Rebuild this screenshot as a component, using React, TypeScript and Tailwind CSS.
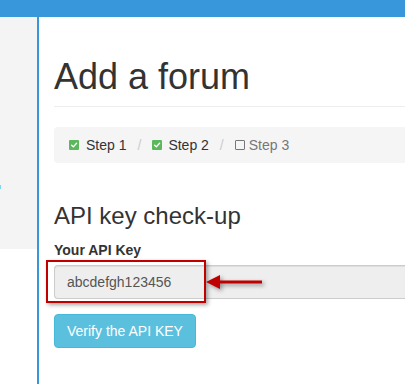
import React from "react";

const CheckedBox = () => (
  <span className="inline-flex h-[10px] w-[10px] items-center justify-center rounded-[1px] bg-[#5cb85c]">
    <svg viewBox="0 0 10 10" className="h-[8px] w-[8px]">
      <path d="M2 5.2 L4.2 7.3 L8.2 2.8" fill="none" stroke="#fff" strokeWidth="1.7" strokeLinecap="round" strokeLinejoin="round" />
    </svg>
  </span>
);

const EmptyBox = () => (
  <span className="inline-block h-[10px] w-[10px] rounded-[1px] border border-[#777]" />
);

const Sep = () => <span className="mx-[11px] text-[#ccc]">/</span>;

export default function App() {
  return (
    <div className="flex min-h-[384px] flex-col font-['Liberation_Sans',Arial,sans-serif] text-[14px] text-[#333]">
      {/* top bar */}
      <div className="h-[17px] bg-[#3897db]" />

      <div className="flex flex-1">
        {/* sidebar */}
        <div className="w-[37px] shrink-0">
          <div className="h-[232px] bg-[#f4f4f4] pt-[168px]">
            <div className="h-[4px] w-[1px] bg-[#7fd6f0]" />
          </div>
        </div>

        {/* main */}
        <div className="flex-1 border-l-2 border-[#3897db] pl-[15px]">
          <div className="mt-[40px] border-b border-[#eee] pb-[9px]">
            <h1 className="text-[36px] leading-[40px] font-normal">Add a forum</h1>
          </div>

          <div className="mt-[20px] flex h-[36px] items-center rounded-l-[4px] bg-[#f5f5f5] px-[15px] leading-[20px]">
            <span className="flex items-center">
              <CheckedBox />
              <span className="ml-[7px]">Step 1</span>
            </span>
            <Sep />
            <span className="flex items-center">
              <CheckedBox />
              <span className="ml-[6px]">Step 2</span>
            </span>
            <Sep />
            <span className="flex items-center text-[#777]">
              <EmptyBox />
              <span className="ml-[4px]">Step 3</span>
            </span>
          </div>

          <h3 className="mt-[40px] text-[24px] leading-[26px] font-normal">API key check-up</h3>

          <label className="mt-[11px] block font-bold leading-[20px]">Your API Key</label>

          <div className="relative mt-[5px]">
            <input
              readOnly
              value="abcdefgh123456"
              className="block h-[34px] w-full rounded-l-[4px] border border-r-0 border-[#ccc] bg-[#eee] px-[12px] text-[14px] text-[#555] shadow-[inset_0_1px_1px_rgba(0,0,0,0.075)] outline-none"
            />
            {/* annotation */}
            <div className="pointer-events-none absolute left-[-8px] top-[-5px] h-[43px] w-[160px] border-2 border-[#c00000] shadow-[2px_2px_4px_rgba(0,0,0,0.35)]" />
            <svg
              className="pointer-events-none absolute left-[151px] top-[7px] h-[20px] w-[62px] drop-shadow-[2px_2px_2px_rgba(0,0,0,0.4)]"
              viewBox="0 0 62 20"
            >
              <path d="M1 10 L15 3 L15 8.5 L57 8.5 L57 11.5 L15 11.5 L15 17 Z" fill="#c00000" />
            </svg>
          </div>

          <button className="mt-[15px] h-[34px] rounded-[4px] border border-[#46b8da] bg-[#5bc0de] px-[12px] text-[14px] leading-[20px] text-white">
            Verify the API KEY
          </button>
        </div>
      </div>
    </div>
  );
}
